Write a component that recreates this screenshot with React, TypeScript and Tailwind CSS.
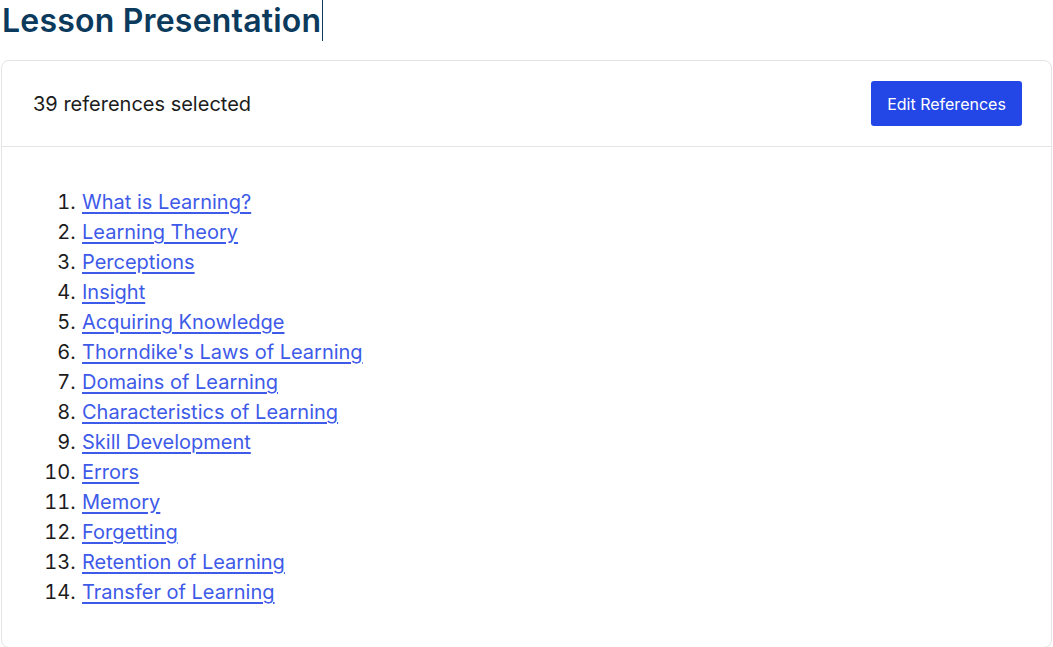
const references = [
  "What is Learning?",
  "Learning Theory",
  "Perceptions",
  "Insight",
  "Acquiring Knowledge",
  "Thorndike's Laws of Learning",
  "Domains of Learning",
  "Characteristics of Learning",
  "Skill Development",
  "Errors",
  "Memory",
  "Forgetting",
  "Retention of Learning",
  "Transfer of Learning",
];

export default function App() {
  return (
    <div className="min-h-screen bg-white px-[1px] font-['Inter',sans-serif]">
      <h1 className="mb-[19px] flex h-[41px] items-center pl-[1px] text-[32px] font-semibold tracking-[0.2px] text-[#0c3a5c]">
        <span>Lesson Presentation</span>
        <span className="ml-[1px] h-[41px] w-[1px] self-start bg-[#0c3a5c]" />
      </h1>

      <div className="rounded-[8px] border border-[#e4e4e4] bg-white">
        <div className="flex h-[86px] items-center justify-between border-b border-[#e4e4e4] pl-[31px] pr-[29px]">
          <p className="text-[20px] text-[#1c1c1c]">39 references selected</p>
          <button className="h-[45px] w-[151px] rounded-[3px] bg-[#2346e6] text-[16px] text-white">
            Edit References
          </button>
        </div>

        <ol className="list-decimal py-10 pl-[79px] text-[20px] leading-[30px] text-[#1c1c1c]">
          {references.map((title) => (
            <li key={title} className="pl-[1px]">
              <a href="#" className="text-[#3e5ae8] underline underline-offset-[3px]">
                {title}
              </a>
            </li>
          ))}
        </ol>
      </div>
    </div>
  );
}
